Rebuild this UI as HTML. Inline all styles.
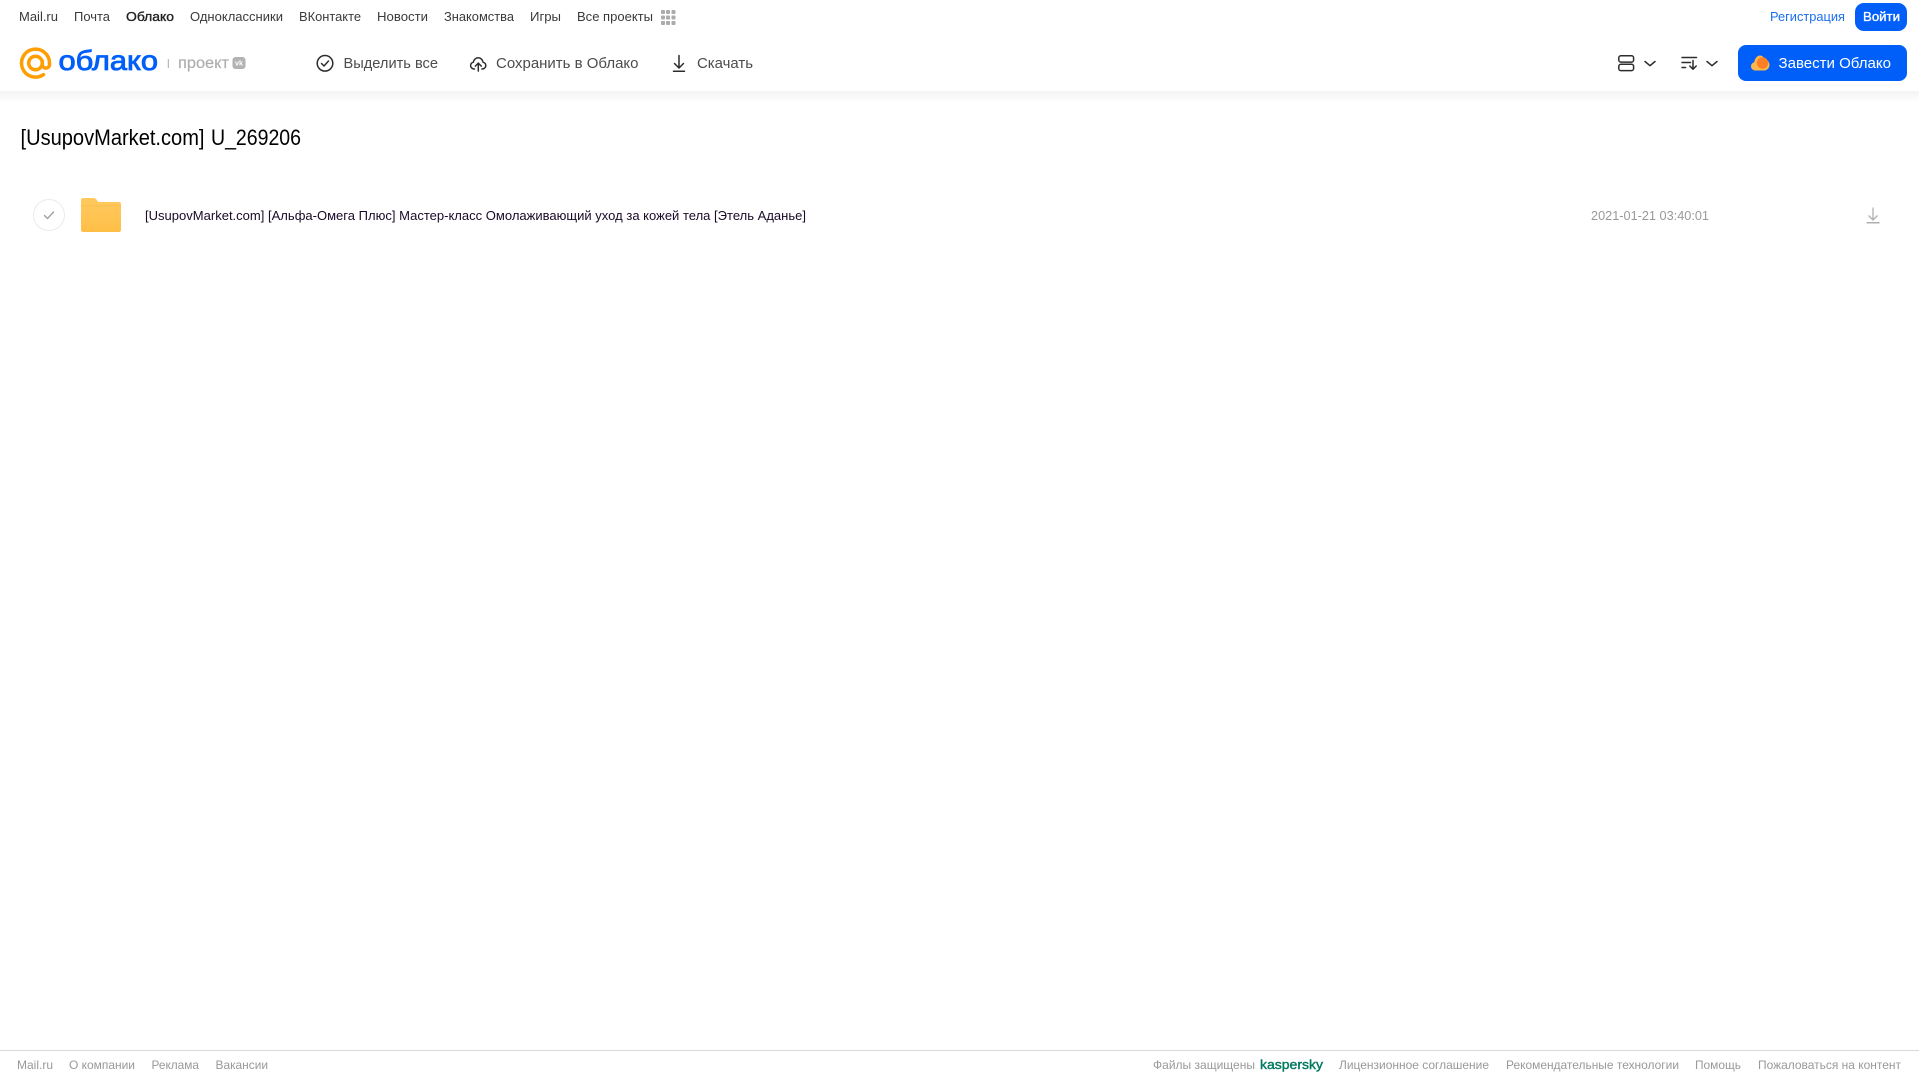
<!DOCTYPE html>
<html lang="ru">
<head>
<meta charset="utf-8">
<title>Облако</title>
<style>
html,body{margin:0;padding:0;background:#fff;width:1919px;height:1079px;overflow:hidden}
svg{display:block;position:absolute;left:0;top:0}
text{font-family:"Liberation Sans","DejaVu Sans",sans-serif;white-space:pre}
.n{font-size:13px;fill:#3a3a3a}
.t{font-size:15px;fill:#4c4c4c}
.f{font-size:12px;fill:#999}
.ic{fill:none;stroke:#2c2d2e;stroke-width:1.500;stroke-linecap:round;stroke-linejoin:round}
</style>
</head>
<body>
<svg width="1919" height="1079" viewBox="0 0 1919 1079" xmlns="http://www.w3.org/2000/svg">
<defs>
<linearGradient id="sh" x1="0" y1="0" x2="0" y2="1"><stop offset="0" stop-color="#f3f3f3"/><stop offset="1" stop-color="#fff"/></linearGradient>
<linearGradient id="fo" x1="0" y1="0" x2="0" y2="1"><stop offset="0" stop-color="#ffc95f"/><stop offset="1" stop-color="#ffbf47"/></linearGradient>
</defs>
<rect x="0" y="91" width="1919" height="11" fill="url(#sh)"/>

<!-- top nav -->
<text class="n" x="19" y="21" textLength="39" lengthAdjust="spacingAndGlyphs">Mail.ru</text>
<text class="n" x="74" y="21" textLength="36" lengthAdjust="spacingAndGlyphs">Почта</text>
<text class="n" x="126" y="21" textLength="48" lengthAdjust="spacingAndGlyphs" style="fill:#222;stroke:#222;stroke-width:.35">Облако</text>
<text class="n" x="190" y="21" textLength="93" lengthAdjust="spacingAndGlyphs">Одноклассники</text>
<text class="n" x="299" y="21" textLength="62" lengthAdjust="spacingAndGlyphs">ВКонтакте</text>
<text class="n" x="377" y="21" textLength="51" lengthAdjust="spacingAndGlyphs">Новости</text>
<text class="n" x="444" y="21" textLength="70" lengthAdjust="spacingAndGlyphs">Знакомства</text>
<text class="n" x="530" y="21" textLength="31" lengthAdjust="spacingAndGlyphs">Игры</text>
<text class="n" x="577" y="21" textLength="76" lengthAdjust="spacingAndGlyphs">Все проекты</text>
<g fill="#ababab">
<rect x="661" y="10" width="4" height="4" rx="1"/><rect x="666" y="10" width="4" height="4" rx="1"/><rect x="671.500" y="10" width="4" height="4" rx="1"/>
<rect x="661" y="15.500" width="4" height="4" rx="1"/><rect x="666" y="15.500" width="4" height="4" rx="1"/><rect x="671.500" y="15.500" width="4" height="4" rx="1"/>
<rect x="661" y="21" width="4" height="4" rx="1"/><rect x="666" y="21" width="4" height="4" rx="1"/><rect x="671.500" y="21" width="4" height="4" rx="1"/>
</g>

<text x="1770" y="21" font-size="13" fill="#1a6ff0" textLength="75" lengthAdjust="spacingAndGlyphs">Регистрация</text>
<rect x="1855" y="3" width="52" height="28" rx="9" fill="#005ff9"/>
<text x="1863" y="21" font-size="13" fill="#fff" stroke="#fff" stroke-width=".35" textLength="37" lengthAdjust="spacingAndGlyphs">Войти</text>

<!-- logo -->
<g fill="none" stroke="#ff9e00" stroke-width="3.500" stroke-linecap="round">
<circle cx="35.500" cy="63" r="6.800"/>
<path d="M42.300 61v3.500a3.600 3.600 0 0 0 7.200 0V63a14 14 0 1 0-6 11.600"/>
</g>
<text x="58.500" y="70" font-size="28" fill="#005ff9" stroke="#005ff9" stroke-width=".85" textLength="99.500" lengthAdjust="spacingAndGlyphs">облако</text>
<rect x="167.800" y="59" width="1" height="9" fill="#aaa"/>
<text x="178" y="68" font-size="15.500" fill="#adadad" stroke="#adadad" stroke-width=".15" textLength="51" lengthAdjust="spacingAndGlyphs">проект</text>
<rect x="232.500" y="57" width="13" height="12" rx="3" fill="#b3b3b3"/>
<text x="235" y="65.500" font-size="7" font-weight="700" fill="#fff" textLength="8" lengthAdjust="spacingAndGlyphs">vk</text>

<!-- toolbar -->
<circle class="ic" cx="325" cy="63.300" r="7.800"/>
<path class="ic" d="M321.500 63.500l2.500 2.500 4.500-5"/>
<text class="t" x="343.500" y="68" textLength="94.500" lengthAdjust="spacingAndGlyphs">Выделить все</text>

<path class="ic" d="M474.500 69c-2.500 0-3.900-1.700-3.900-3.400 0-1.700 1.100-3 2.700-3.300.4-2.600 2.400-4.600 4.900-4.600s4.500 2 4.900 4.600c1.600.3 2.700 1.600 2.700 3.300 0 1.700-1.400 3.400-3.900 3.400"/>
<path class="ic" d="M478.300 71V63.300M475.300 66.100l3-3 3 3"/>
<text class="t" x="496" y="68" textLength="142.500" lengthAdjust="spacingAndGlyphs">Сохранить в Облако</text>

<path class="ic" d="M679 55.500v12M674.500 63.500l4.500 4.500 4.500-4.500M673.500 71.300h11"/>
<text class="t" x="697" y="68" textLength="56" lengthAdjust="spacingAndGlyphs">Скачать</text>

<!-- right tools -->
<rect class="ic" x="1618.800" y="55.800" width="14.800" height="6.300" rx="2"/>
<rect class="ic" x="1618.800" y="64.300" width="14.800" height="6.300" rx="2"/>
<path class="ic" stroke-width="1.800" d="M1645 61.500l5 4.200 5-4.200"/>
<path class="ic" stroke-width="1.300" d="M1682 57.500h14.500M1682 62.500h8.500M1682 67.500h3.500M1693 60.500v8.500M1689.800 66l3.200 3.200 3.200-3.200"/>
<path class="ic" stroke-width="1.800" d="M1707 61.500l5 4.200 5-4.200"/>

<rect x="1738" y="45" width="169" height="36" rx="8" fill="#005ff9"/>
<path d="M1755.500 70.500c-2.600 0-4.500-1.900-4.500-4.200 0-2 1.400-3.700 3.200-4.100.6-3.300 2.700-6.700 5.600-6.700 2.400 0 4 1.500 4.900 3.900 2.700.2 4.800 2.700 4.800 5.500 0 3-2.400 5.600-5.300 5.600z" fill="#ffb64a"/>
<circle cx="1762.500" cy="63" r="5.700" fill="#ff7f24"/>
<text x="1778.500" y="68" font-size="15" fill="#fff" textLength="112.500" lengthAdjust="spacingAndGlyphs">Завести Облако</text>

<!-- title -->
<text x="20.500" y="145" font-size="22" fill="#000" textLength="184" lengthAdjust="spacingAndGlyphs">[UsupovMarket.com]</text>
<text x="211" y="145" font-size="22" fill="#000" textLength="90" lengthAdjust="spacingAndGlyphs">U_269206</text>

<!-- row -->
<circle cx="49" cy="215" r="15.500" fill="#fff" stroke="#ebebeb" stroke-width="1"/>
<path d="M44.500 215.500l3 3 6-6.500" fill="none" stroke="#9e9e9e" stroke-width="1.300" stroke-linecap="round" stroke-linejoin="round"/>
<path d="M83 198h10c2.200 0 3 .8 3.800 2 .6 1 1.200 2 2.700 2h19.500c1.100 0 2 .9 2 2v26c0 1.100-.9 2-2 2H83c-1.100 0-2-.9-2-2v-30c0-1.100.9-2 2-2z" fill="url(#fo)"/>
<rect x="81" y="205.500" width="40" height="1" fill="#f6b440" opacity=".5"/>
<text x="145" y="220" font-size="12.500" fill="#1a0a28" textLength="661" lengthAdjust="spacingAndGlyphs">[UsupovMarket.com] [Альфа-Омега Плюс] Мастер-класс Омолаживающий уход за кожей тела [Этель Аданье]</text>
<text x="1591" y="220" font-size="12.500" fill="#999" textLength="118" lengthAdjust="spacingAndGlyphs">2021-01-21 03:40:01</text>
<path d="M1873 207.500v12.500M1868.500 215.500l4.500 4.500 4.500-4.500" fill="none" stroke="#b0b0b0" stroke-width="1.300"/>
<rect x="1866.500" y="222" width="13" height="1.500" fill="#b0b0b0"/>

<!-- footer -->
<rect x="0" y="1050" width="1919" height="1" fill="#d9d9d9"/>
<text class="f" x="17" y="1069" textLength="36" lengthAdjust="spacingAndGlyphs">Mail.ru</text>
<text class="f" x="69" y="1069" textLength="66" lengthAdjust="spacingAndGlyphs">О компании</text>
<text class="f" x="151.500" y="1069" textLength="47.500" lengthAdjust="spacingAndGlyphs">Реклама</text>
<text class="f" x="215.500" y="1069" textLength="52.500" lengthAdjust="spacingAndGlyphs">Вакансии</text>
<text class="f" x="1153" y="1069" textLength="102" lengthAdjust="spacingAndGlyphs">Файлы защищены</text>
<text x="1260" y="1069" font-size="13" fill="#00795f" stroke="#00795f" stroke-width=".4" textLength="63" lengthAdjust="spacingAndGlyphs">kaspersky</text>
<text class="f" x="1339" y="1069" textLength="150" lengthAdjust="spacingAndGlyphs">Лицензионное соглашение</text>
<text class="f" x="1506" y="1069" textLength="173" lengthAdjust="spacingAndGlyphs">Рекомендательные технологии</text>
<text class="f" x="1695" y="1069" textLength="46" lengthAdjust="spacingAndGlyphs">Помощь</text>
<text class="f" x="1758" y="1069" textLength="143" lengthAdjust="spacingAndGlyphs">Пожаловаться на контент</text>
</svg>
</body>
</html>
